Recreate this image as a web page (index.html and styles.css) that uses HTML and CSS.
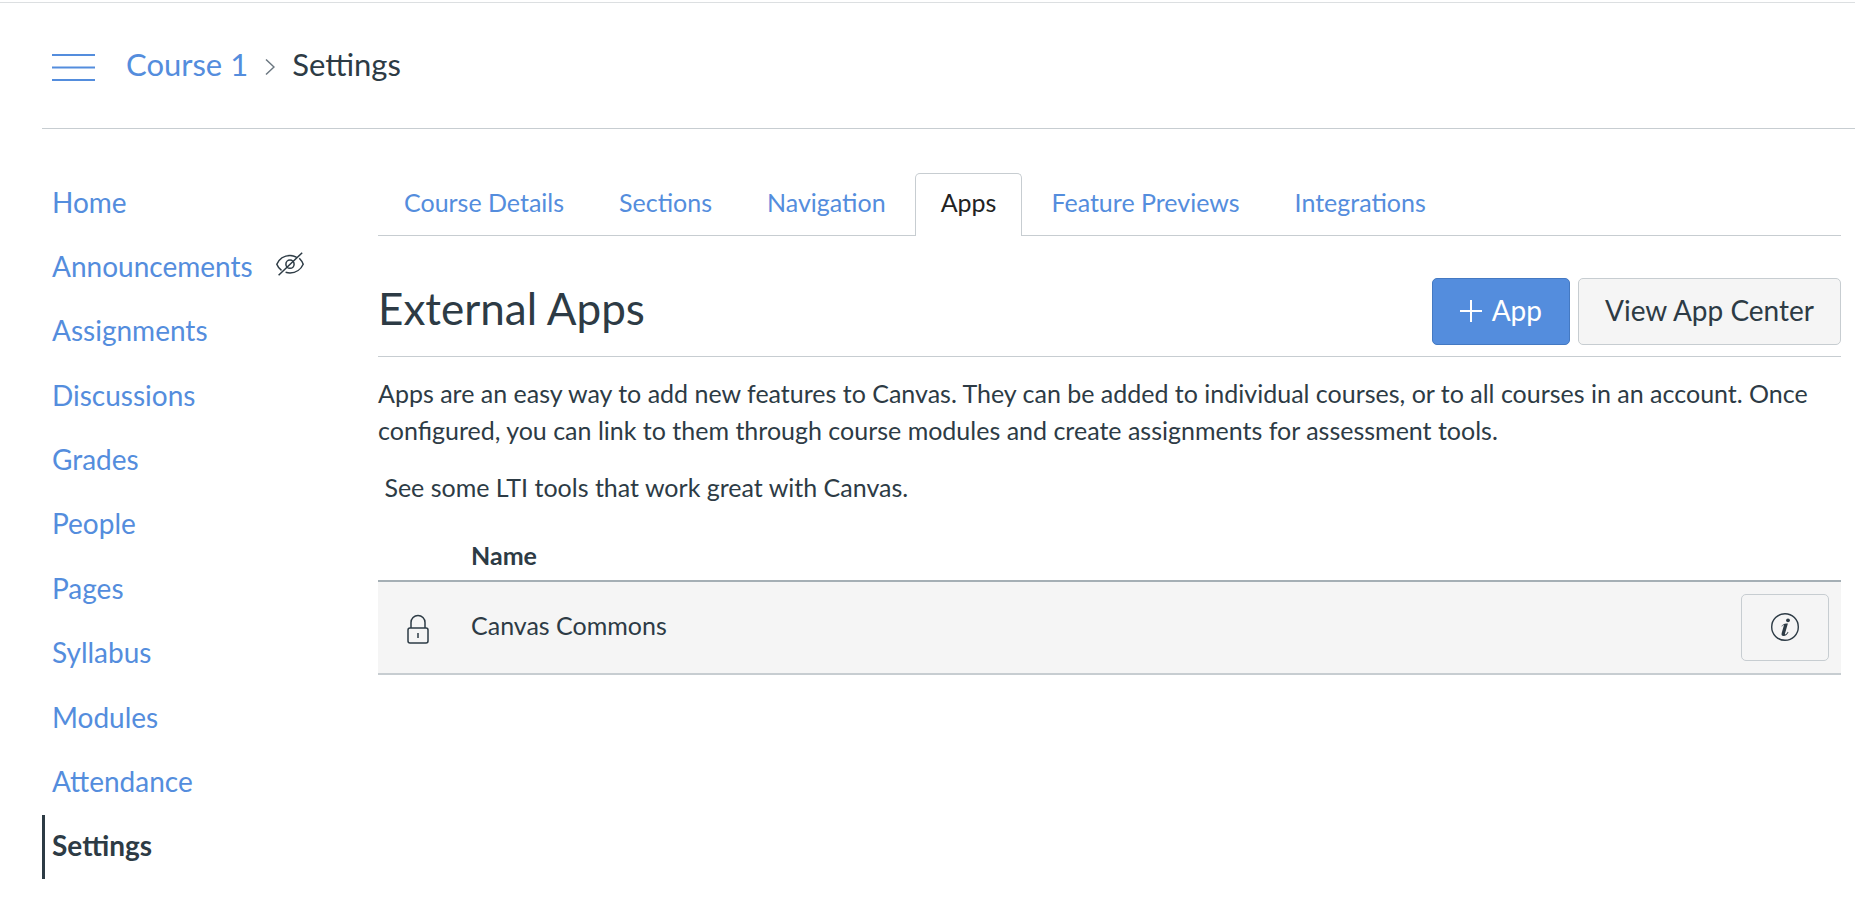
FILE: index.html
```html
<!DOCTYPE html>
<html lang="en">
<head>
<meta charset="utf-8">
<meta name="viewport" content="width=device-width, initial-scale=1">
<title>Course 1: Settings</title>
<link rel="stylesheet" href="styles.css">
</head>
<body>
<header class="topbar">
  <button class="menu-toggle" type="button" aria-label="Toggle course menu">
    <svg class="menu-icon" viewBox="0 0 43 28" aria-hidden="true"><path d="M0 2h43M0 14.500h43M0 27h43"/></svg>
  </button>
  <nav class="crumbs" aria-label="Breadcrumb">
    <a class="crumb-link" href="#">Course 1</a>
    <svg class="crumb-arrow" viewBox="0 0 10 18" aria-hidden="true"><path d="M1 1.500l8 7.500-8 7.500"/></svg>
    <span class="crumb-current">Settings</span>
  </nav>
</header>
<div class="layout">
  <nav class="course-nav" aria-label="Course navigation">
    <ul class="nav-list">
      <li class="nav-item"><a class="nav-link" href="#">Home</a></li>
      <li class="nav-item"><a class="nav-link" href="#">Announcements</a>
        <svg class="eye-icon" viewBox="0 0 28 24" aria-hidden="true"><path d="M2.600 23.300L26.200.7M20.400 5.100C18.500 4 16.300 3.400 14 3.400C8 3.400 3 7.300.8 12.200C1.800 14.700 3.400 16.900 5.500 18.400M23.300 6.200C25 7.900 26.400 9.900 27.200 12.200C25 17.200 20 21 14 21C12.500 21 11 20.700 9.600 20.300"/><circle cx="14" cy="12.200" r="4.100"/></svg>
      </li>
      <li class="nav-item"><a class="nav-link" href="#">Assignments</a></li>
      <li class="nav-item"><a class="nav-link" href="#">Discussions</a></li>
      <li class="nav-item"><a class="nav-link" href="#">Grades</a></li>
      <li class="nav-item"><a class="nav-link" href="#">People</a></li>
      <li class="nav-item"><a class="nav-link" href="#">Pages</a></li>
      <li class="nav-item"><a class="nav-link" href="#">Syllabus</a></li>
      <li class="nav-item"><a class="nav-link" href="#">Modules</a></li>
      <li class="nav-item"><a class="nav-link" href="#">Attendance</a></li>
      <li class="nav-item active"><a class="nav-link" href="#" aria-current="page">Settings</a></li>
    </ul>
  </nav>
  <main class="content">
    <nav class="tabs" aria-label="Settings sections">
      <a class="tab" href="#">Course Details</a>
      <a class="tab" href="#">Sections</a>
      <a class="tab" href="#">Navigation</a>
      <a class="tab selected" href="#" aria-current="true">Apps</a>
      <a class="tab" href="#">Feature Previews</a>
      <a class="tab" href="#">Integrations</a>
    </nav>
    <div class="heading-row">
      <h1 class="heading">External Apps</h1>
      <div class="actions">
        <button class="btn primary" type="button">
          <svg class="plus-icon" viewBox="0 0 22 22" aria-hidden="true"><path d="M11 0v22M0 11h22"/></svg>App</button>
        <button class="btn" type="button">View App Center</button>
      </div>
    </div>
    <p class="intro">Apps are an easy way to add new features to Canvas. They can be added to individual courses, or to all courses in an account. Once configured, you can link to them through course modules and create assignments for assessment tools.</p>
    <p class="intro">&nbsp;See some LTI tools that work great with Canvas.</p>
    <table class="apps">
      <thead>
        <tr><th class="col-lock"></th><th class="col-name" scope="col">Name</th><th class="col-action"></th></tr>
      </thead>
      <tbody>
        <tr>
          <td class="col-lock"><svg class="lock-icon" viewBox="0 0 22 30" role="img" aria-label="Locked"><path d="M4 14V8.500a7 7 0 0 1 14 0V14M11 19v5"/><rect x="1" y="14" width="20" height="15" rx="2"/></svg></td>
          <td class="col-name">Canvas Commons</td>
          <td class="col-action"><button class="btn info" type="button" aria-label="App details"><svg class="info-icon" viewBox="0 0 28 28" aria-hidden="true"><circle cx="14" cy="14" r="13.300"/><circle class="solid" cx="17" cy="7.300" r="1.900"/><path class="solid" d="M10.400 13.300C11.300 11.700 13 10.600 15.200 10.400L16.900 10.400L14 20.500C13.700 21.700 14.400 21.700 15 21.100C15.800 20.400 16.300 19.600 16.800 18.800L17.500 19.200C16.300 21.400 14.700 23.100 12.600 23.100C10.700 23.100 10.200 21.800 10.700 20.100L12.700 13C13 11.900 12.500 11.700 11.900 12.200C11.500 12.600 11.300 13 11 13.600Z"/></svg></button></td>
        </tr>
      </tbody>
    </table>
  </main>
</div>
</body>
</html>
```
FILE: styles.css
```css
* { box-sizing: border-box; }

body {
  margin: 0;
  padding-top: 2px;
  background: #fff;
  color: #2d3b45;
  font-family: Lato, "Open Sans", sans-serif;
  font-size: 25px;
  line-height: 37px;
}

a { color: #548ddd; text-decoration: none; }
button { font: inherit; cursor: pointer; }
svg { display: block; fill: none; stroke: currentColor; }

.topbar {
  display: flex;
  align-items: center;
  height: 127px;
  border-top: 1px solid #dcdfe1;
  position: relative;
  padding: 0 0 4px 52px;
  gap: 31px;
}
.topbar::after {
  content: "";
  position: absolute;
  left: 42px;
  right: 0;
  bottom: 0;
  border-bottom: 1px solid #c7cdd1;
}
.menu-toggle { padding: 6px 0 0; border: 0; background: none; color: #548ddd; }
.menu-icon { width: 43px; height: 28px; stroke-width: 2; }
.crumbs { display: flex; align-items: center; gap: 17px; font-size: 31px; line-height: 40px; }
.crumb-arrow { width: 10px; height: 18px; margin-top: 6px; color: #6b7780; stroke-width: 1.5; }

.layout { display: flex; padding: 42px 14px 0 42px; }

.course-nav { flex: 0 0 336px; }
.nav-list {
  display: grid;
  grid-template-rows: repeat(11, 1fr);
  min-height: 708px;
  margin: 0;
  padding: 0;
  list-style: none;
  font-size: 28px;
}
.nav-item { display: flex; align-items: center; gap: 23px; padding: 0 0 2px 10px; }
.nav-item.active { padding-left: 7px; border-left: 3px solid #2d3b45; font-weight: 700; }
.nav-item.active .nav-link { color: #2d3b45; }
.eye-icon { width: 28px; height: 24px; margin-bottom: 6px; stroke-width: 1.500; }

.content { flex: 1; min-width: 0; padding-top: 2px; }

.tabs { display: flex; gap: 3px; border-bottom: 1px solid #c7cdd1; }
.tab {
  height: 62px;
  padding: 10px 25px 0;
  border: 1px solid transparent;
  border-bottom: 0;
  border-radius: 5px 5px 0 0;
}
.tab.selected { height: 63px; margin-bottom: -1px; border-color: #c7cdd1; background: #fff; color: #222; }

.heading-row {
  display: flex;
  align-items: flex-start;
  justify-content: space-between;
  padding: 42px 0 11px;
  border-bottom: 1px solid #c7cdd1;
}
.heading { margin: 0; font-size: 44px; line-height: 60px; font-weight: 400; }
.actions { display: flex; gap: 8px; }
.btn {
  display: flex;
  align-items: center;
  justify-content: center;
  gap: 10px;
  height: 67px;
  padding: 0 26px 2px;
  border: 1px solid #c7cdd1;
  border-radius: 5px;
  background: #f5f5f5;
  color: #2d3b45;
  font-size: 28px;
}
.btn.primary { padding: 0 27px 2px; border-color: #4479c2; background: #548ddd; color: #fff; }
.plus-icon { width: 22px; height: 22px; stroke-width: 2; }

.intro { margin: 18px 0 20px; }

.apps { width: 100%; border-collapse: collapse; text-align: left; }
.apps th { padding: 11px 0 6px; font-weight: 700; }
.apps td { padding: 12px 0; background: #f5f5f5; }
.apps thead tr { border-bottom: 2px solid #a5afb5; }
.apps tbody tr { border-bottom: 2px solid #c7cdd1; }
.apps td.col-name { padding-bottom: 16px; }
.apps td.col-lock { padding-top: 14px; }
.apps .col-lock { width: 93px; padding-left: 29px; }
.apps .col-action { width: 100px; padding-right: 12px; }
.lock-icon { width: 22px; height: 30px; stroke-width: 1.500; }
.btn.info { width: 88px; }
.info-icon { width: 28px; height: 28px; flex: none; stroke-width: 1.400; }
.info-icon .solid { fill: currentColor; stroke: none; }
```
